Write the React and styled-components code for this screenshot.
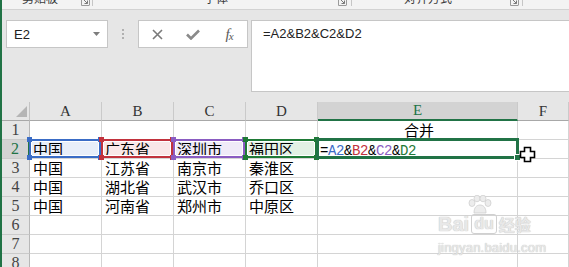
import React from 'react';
import styled, { createGlobalStyle } from 'styled-components';

const Global = createGlobalStyle`
  html, body { margin: 0; padding: 0; }
  body { width: 569px; height: 267px; overflow: hidden; background: #fff; }
  * { box-sizing: border-box; }
`;

const Window = styled.div`
  position: relative;
  width: 569px;
  height: 267px;
  overflow: hidden;
  background: #e6e6e6;
  border-left: 2px solid #217346;
  font-family: "Liberation Sans", Arial, sans-serif;
`;

/* ---------- ribbon strip ---------- */
const Ribbon = styled.div`
  display: flex;
  height: 10px;
  background: #f3f3f3;
  border-bottom: 1px solid #d2d2d2;
  overflow: hidden;
`;
const RibbonGroup = styled.div`
  display: flex;
  align-items: flex-start;
  width: ${p => p.$w}px;
  padding-left: ${p => p.$pad}px;
`;
const RibbonLabel = styled.span`
  margin-top: -8px;
  font-family: "Noto Sans CJK SC", sans-serif;
  font-size: 12px;
  line-height: 12px;
  color: #3c3c3c;
  white-space: nowrap;
`;
const Launcher = styled.svg`
  margin-left: auto;
  margin-right: ${p => p.$mr}px;
  margin-top: -3px;
  flex: none;
`;
const GroupSep = styled.div`
  width: 1px;
  height: 6px;
  background: #c6c6c6;
  flex: none;
`;

/* ---------- formula row ---------- */
const FormulaRow = styled.div`
  display: flex;
  align-items: flex-start;
  padding: 10px 0 0 4px;
  margin-bottom: 10px;
`;
const NameBox = styled.div`
  display: flex;
  align-items: center;
  width: 102px;
  height: 28px;
  padding: 0 7px 0 7px;
  background: #fff;
  border: 1px solid #c6c6c6;
  font-size: 13px;
  color: #222;
`;
const NameArrow = styled.svg`
  margin-left: auto;
`;
const Grip = styled.div`
  display: flex;
  flex-direction: column;
  align-items: center;
  justify-content: center;
  gap: 2px;
  width: 30px;
  height: 28px;
  span {
    width: 2px;
    height: 2px;
    background: #b0b0b0;
  }
`;
const ButtonBox = styled.div`
  display: flex;
  align-items: center;
  width: 110px;
  height: 28px;
  background: #fff;
  border: 1px solid #c6c6c6;
`;
const IconButton = styled.div`
  display: flex;
  align-items: center;
  justify-content: center;
  width: 36px;
  height: 26px;
`;
const Fx = styled.span`
  font-family: "Liberation Serif", "Times New Roman", serif;
  font-style: italic;
  font-size: 15px;
  color: #5a5a5a;
  letter-spacing: -1px;
  sub {
    font-size: 11px;
    vertical-align: -1px;
  }
`;
const FormulaInput = styled.div`
  flex: 1;
  margin-left: 3px;
  height: 72px;
  padding: 5px 11px;
  background: #fff;
  border: 1px solid #c6c6c6;
  border-right: none;
  font-size: 13px;
  line-height: 16px;
  color: #222;
`;

/* ---------- sheet ---------- */
const Sheet = styled.div`
  display: grid;
  grid-template-columns: 28px 72px 72px 72px 72px 200px 1fr;
  grid-auto-rows: 19px;
  background: #fff;
`;
const Corner = styled.div`
  display: flex;
  align-items: flex-end;
  justify-content: flex-end;
  padding: 0 2px 3px 0;
  background: #e6e6e6;
  border-right: 1px solid #c4c4c4;
  border-bottom: 1px solid #a8a8a8;
`;
const ColHead = styled.div`
  display: flex;
  align-items: center;
  justify-content: center;
  background: ${p => (p.$active ? '#d3d3d3' : '#e6e6e6')};
  color: ${p => (p.$active ? '#217346' : '#333')};
  border-right: 1px solid #cacaca;
  border-bottom: ${p => (p.$active ? '2px solid #217346' : '1px solid #a8a8a8')};
  font-family: "Liberation Serif", "Times New Roman", serif;
  font-size: 15px;
`;
const RowHead = styled.div`
  display: flex;
  align-items: center;
  justify-content: center;
  background: ${p => (p.$active ? '#d3d3d3' : '#e6e6e6')};
  color: ${p => (p.$active ? '#217346' : '#444')};
  border-right: ${p => (p.$active ? '2px solid #217346' : '1px solid #b8b8b8')};
  border-bottom: 1px solid #cacaca;
  font-family: "Liberation Serif", "Times New Roman", serif;
  font-size: 16px;
`;
const Cell = styled.div`
  position: ${p => (p.$rel ? 'relative' : 'static')};
  padding: 0 0 0 ${p => (p.$mono ? 2 : 3)}px;
  background: ${p => p.$fill || 'transparent'};
  border-right: 1px solid #d4d4d4;
  border-bottom: 1px solid #d4d4d4;
  font-family: "Noto Sans CJK SC", sans-serif;
  font-size: 15px;
  line-height: 18px;
  color: #000;
  text-align: ${p => (p.$center ? 'center' : 'left')};
  white-space: nowrap;
`;
const Mono = styled.span`
  display: inline-block;
  padding-top: 2px;
  font-family: "Liberation Mono", "Courier New", monospace;
  font-size: 14px;
  letter-spacing: -0.4px;
  line-height: 16px;
  color: ${p => p.$c || '#000'};
`;
const RangeBox = styled.div`
  position: absolute;
  top: -1px;
  left: -1px;
  right: 0;
  bottom: 0;
  border: 2px solid ${p => p.$c};
  box-shadow: inset 0 0 0 1px #fff;
  pointer-events: none;
  z-index: 1;
`;
const Handle = styled.i`
  position: absolute;
  width: 5px;
  height: 5px;
  background: ${p => p.$c};
  ${p => (p.$top ? 'top: -4px;' : 'bottom: -4px;')}
  ${p => (p.$left ? 'left: -4px;' : 'right: -4px;')}
`;
const Selection = styled.div`
  position: absolute;
  top: -2px;
  left: -2px;
  right: -2px;
  bottom: -1px;
  border: 3px solid #217346;
  pointer-events: none;
  z-index: 2;
`;
const FillHandle = styled.i`
  position: absolute;
  right: -5px;
  bottom: -5px;
  width: 7px;
  height: 7px;
  background: #217346;
  border: 1px solid #fff;
`;

/* ---------- overlays ---------- */
const Cursor = styled.svg`
  position: absolute;
  left: 517px;
  top: 146px;
  z-index: 5;
`;
const Watermark = styled.div`
  position: absolute;
  left: 436px;
  top: 204px;
  display: flex;
  flex-direction: column;
  align-items: flex-start;
  color: #e8e8e8;
  text-shadow: 0 0 1px #c9c9c9, 0 0 1px #c9c9c9;
  pointer-events: none;
  z-index: 4;
`;
const WmTop = styled.div`
  display: flex;
  align-items: flex-end;
  height: 30px;
  font-family: "Liberation Sans", Arial, sans-serif;
  font-weight: bold;
  font-size: 20px;
  line-height: 20px;
`;
const WmDu = styled.span`
  position: relative;
  display: inline-block;
  margin: 0 2px;
  padding: 0 2px;
  font-size: 16px;
  line-height: 18px;
  border: 1px solid #d0d0d0;
  border-radius: 3px;
`;
const Paw = styled.svg`
  position: absolute;
  left: -6px;
  top: -20px;
`;
const WmCjk = styled.span`
  font-family: "Noto Sans CJK SC", sans-serif;
  font-size: 16px;
  line-height: 20px;
  font-weight: bold;
`;
const WmUrl = styled.div`
  margin-top: 7px;
  font-family: "Liberation Sans", Arial, sans-serif;
  font-size: 13px;
  line-height: 13px;
  letter-spacing: 0.2px;
`;

const cols = ['A', 'B', 'C', 'D', 'E', 'F'];
const ranges = ['#3a6cc6', '#c2323d', '#8a5cc2', '#1f7a36'];
const fills = ['#e8eef9', '#f9e7e8', '#efebf8', '#e3f1e5'];
const data = [
  ['', '', '', '', '合并', ''],
  ['中国', '广东省', '深圳市', '福田区', 'F', ''],
  ['中国', '江苏省', '南京市', '秦淮区', '', ''],
  ['中国', '湖北省', '武汉市', '乔口区', '', ''],
  ['中国', '河南省', '郑州市', '中原区', '', ''],
  ['', '', '', '', '', ''],
  ['', '', '', '', '', ''],
  ['', '', '', '', '', ''],
];

const formulaParts = [
  ['=', '#000'], ['A2', '#3a6cc6'], ['&', '#000'], ['B2', '#c2323d'],
  ['&', '#000'], ['C2', '#8a5cc2'], ['&', '#000'], ['D2', '#1f7a36'],
];

function LaunchIcon({ mr }) {
  return (
    <Launcher $mr={mr} width="9" height="9" viewBox="0 0 9 9">
      <path d="M0.5 1 V8.5 H8 M8.5 0 V8.5" stroke="#9a9a9a" fill="none" strokeWidth="1" />
      <path d="M2 2 L6.5 6.5 M6.5 3.5 V6.5 H3.5" stroke="#7a7a7a" fill="none" strokeWidth="1" />
    </Launcher>
  );
}

function Corners({ c }) {
  return (
    <>
      <Handle $c={c} $top $left />
      <Handle $c={c} $top />
      <Handle $c={c} $left />
      <Handle $c={c} />
    </>
  );
}

export default function App() {
  return (
    <Window>
      <Global />
      <Ribbon>
        <RibbonGroup $w={90} $pad={20}>
          <RibbonLabel>剪贴板</RibbonLabel>
          <LaunchIcon mr={2} />
        </RibbonGroup>
        <GroupSep />
        <RibbonGroup $w={258} $pad={111}>
          <RibbonLabel>字体</RibbonLabel>
          <LaunchIcon mr={4} />
        </RibbonGroup>
        <GroupSep />
        <RibbonGroup $w={170} $pad={52}>
          <RibbonLabel>对齐方式</RibbonLabel>
          <LaunchIcon mr={3} />
        </RibbonGroup>
        <GroupSep />
      </Ribbon>

      <FormulaRow>
        <NameBox>
          E2
          <NameArrow width="7" height="4" viewBox="0 0 7 4">
            <path d="M0 0 H7 L3.5 4 Z" fill="#7d7d7d" />
          </NameArrow>
        </NameBox>
        <Grip>
          <span />
          <span />
          <span />
        </Grip>
        <ButtonBox>
          <IconButton>
            <svg width="11" height="11" viewBox="0 0 11 11">
              <path d="M1 1 L10 10 M10 1 L1 10" stroke="#7a7a7a" strokeWidth="1.6" />
            </svg>
          </IconButton>
          <IconButton>
            <svg width="14" height="11" viewBox="0 0 14 11">
              <path d="M1 5.5 L5 9.5 L13 1.5" stroke="#8a8a8a" strokeWidth="2.6" fill="none" />
            </svg>
          </IconButton>
          <IconButton>
            <Fx>f<sub>x</sub></Fx>
          </IconButton>
        </ButtonBox>
        <FormulaInput>=A2&amp;B2&amp;C2&amp;D2</FormulaInput>
      </FormulaRow>

      <Sheet>
        <Corner>
          <svg width="11" height="11" viewBox="0 0 11 11">
            <path d="M11 0 V11 H0 Z" fill="#b5b5b5" />
          </svg>
        </Corner>
        {cols.map(c => (
          <ColHead key={c} $active={c === 'E'}>{c}</ColHead>
        ))}
        {data.map((row, r) => (
          <React.Fragment key={r}>
            <RowHead $active={r === 1}>{r + 1}</RowHead>
            {row.map((v, ci) => {
              const isRange = r === 1 && ci < 4;
              const isSel = r === 1 && ci === 4;
              return (
                <Cell
                  key={ci}
                  $rel={isRange || isSel}
                  $fill={isRange ? fills[ci] : undefined}
                  $center={r === 0 && ci === 4}
                  $mono={isSel}
                >
                  {isSel
                    ? formulaParts.map(([t, c], i) => (
                        <Mono key={i} $c={c}>{t}</Mono>
                      ))
                    : v}
                  {isRange && (
                    <RangeBox $c={ranges[ci]}>
                      <Corners c={ranges[ci]} />
                    </RangeBox>
                  )}
                  {isSel && (
                    <Selection>
                      <FillHandle />
                    </Selection>
                  )}
                </Cell>
              );
            })}
          </React.Fragment>
        ))}
      </Sheet>

      <Watermark>
        <WmTop>
          Bai
          <WmDu>
            <Paw width="26" height="20" viewBox="0 0 26 20">
              <g fill="#ececec" stroke="#cfcfcf" strokeWidth="0.8">
                <ellipse cx="6" cy="8" rx="3" ry="3.5" />
                <ellipse cx="11" cy="3.5" rx="3" ry="3.3" />
                <ellipse cx="17" cy="3.5" rx="3" ry="3.3" />
                <ellipse cx="22" cy="8" rx="3" ry="3.5" />
                <path d="M8 18 C8 12 11 10 14 10 C17 10 20 12 20 18 Z" />
              </g>
            </Paw>
            du
          </WmDu>
          <WmCjk>经验</WmCjk>
        </WmTop>
        <WmUrl>jingyan.baidu.com</WmUrl>
      </Watermark>

      <Cursor width="17" height="17" viewBox="0 0 17 17">
        <path
          d="M5.5 1.5 H11.5 V5.5 H15.5 V11.5 H11.5 V15.5 H5.5 V11.5 H1.5 V5.5 H5.5 Z"
          fill="#fff"
          stroke="#000"
          strokeWidth="1.6"
        />
      </Cursor>
    </Window>
  );
}
